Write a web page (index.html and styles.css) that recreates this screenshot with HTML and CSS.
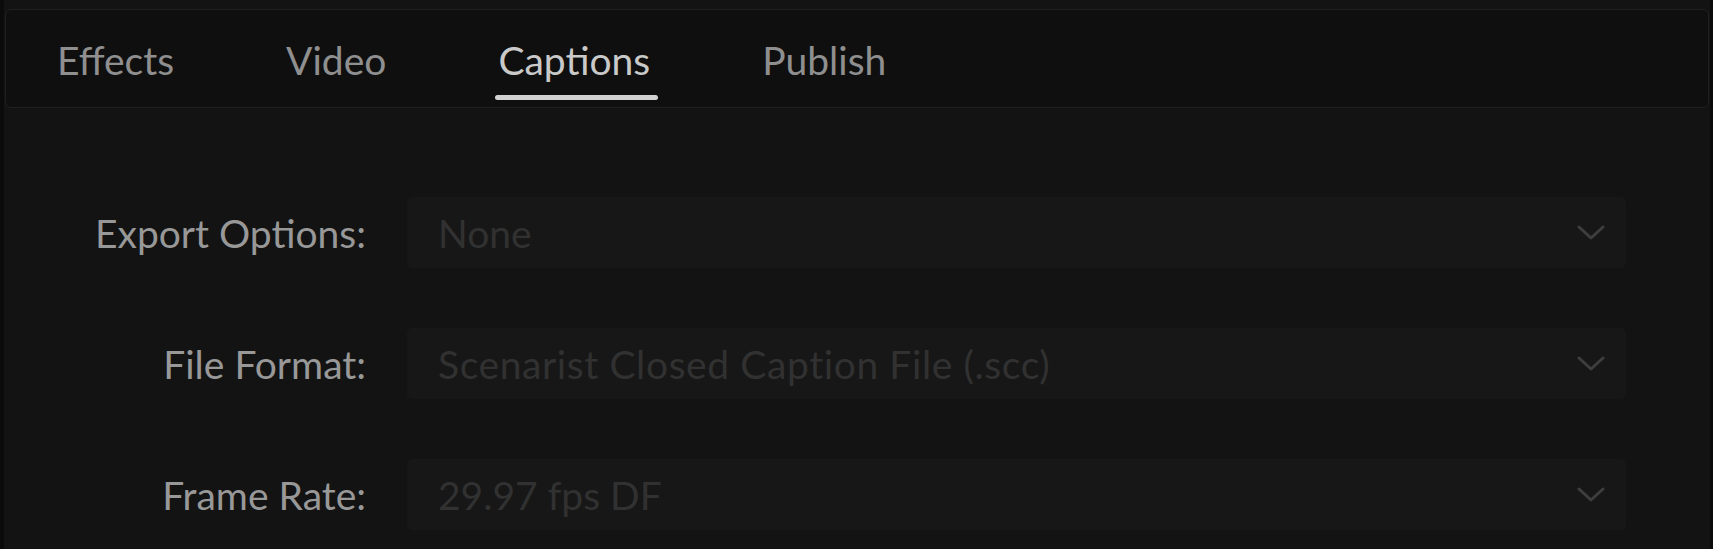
FILE: index.html
```html
<!DOCTYPE html>
<html lang="en">
<head>
<meta charset="utf-8">
<title>Export Settings - Captions</title>
<link rel="stylesheet" href="styles.css">
</head>
<body>
<div class="panel">
  <nav class="tabbar">
    <div class="tab">Effects</div>
    <div class="tab">Video</div>
    <div class="tab active">Captions</div>
    <div class="tab">Publish</div>
  </nav>
  <div class="form">
    <div class="label">Export Options:</div>
    <div class="select">
      <span class="value">None</span>
      <svg class="chev" width="28" height="16" viewBox="0 0 28 16"><path d="M2 2 L14 13 L26 2" fill="none" stroke="currentColor" stroke-width="3" stroke-linecap="round" stroke-linejoin="round"/></svg>
    </div>
    <div class="label">File Format:</div>
    <div class="select">
      <span class="value wide">Scenarist Closed Caption File (.scc)</span>
      <svg class="chev" width="28" height="16" viewBox="0 0 28 16"><path d="M2 2 L14 13 L26 2" fill="none" stroke="currentColor" stroke-width="3" stroke-linecap="round" stroke-linejoin="round"/></svg>
    </div>
    <div class="label">Frame Rate:</div>
    <div class="select">
      <span class="value">29.97 fps DF</span>
      <svg class="chev" width="28" height="16" viewBox="0 0 28 16"><path d="M2 2 L14 13 L26 2" fill="none" stroke="currentColor" stroke-width="3" stroke-linecap="round" stroke-linejoin="round"/></svg>
    </div>
  </div>
</div>
</body>
</html>
```

FILE: styles.css
```css
html, body {
  margin: 0;
  padding: 0;
  background: #0b0b0b;
  height: 100%;
  overflow: hidden;
}
body {
  font-family: "Lato", "Liberation Sans", sans-serif;
  font-size: 39px;
  line-height: 48px;
}
.panel {
  margin-left: 4px;
  margin-right: 3px;
  height: 100%;
  background: #131313;
  padding-top: 9px;
  box-sizing: border-box;
}
.tabbar {
  margin: 0 1px 0 1px;
  height: 99px;
  box-sizing: border-box;
  border: 1px solid #202020;
  border-radius: 6px;
  background: #0f0f0f;
  display: flex;
  gap: 112px;
  padding-left: 51px;
}
.tab {
  position: relative;
  padding-top: 26px;
  color: #8f8f8f;
}
.tab.active {
  color: #c9c9c9;
}
.tab.active::after {
  content: "";
  position: absolute;
  left: -3px;
  right: -8px;
  bottom: 7px;
  height: 5px;
  border-radius: 3px;
  background: #d2d2d2;
}
.form {
  display: grid;
  grid-template-columns: 362px 1219px;
  column-gap: 41px;
  row-gap: 60px;
  padding-top: 89px;
}
.label {
  text-align: right;
  color: #989898;
  align-self: center;
}
.select {
  height: 71px;
  box-sizing: border-box;
  background: #171717;
  border-radius: 5px;
  display: flex;
  align-items: center;
  justify-content: space-between;
  padding: 0 21px 0 31px;
  color: #313131;
}
.value.wide {
  letter-spacing: 0.6px;
}
.chev {
  color: #3e3e3e;
  flex: none;
}
```
